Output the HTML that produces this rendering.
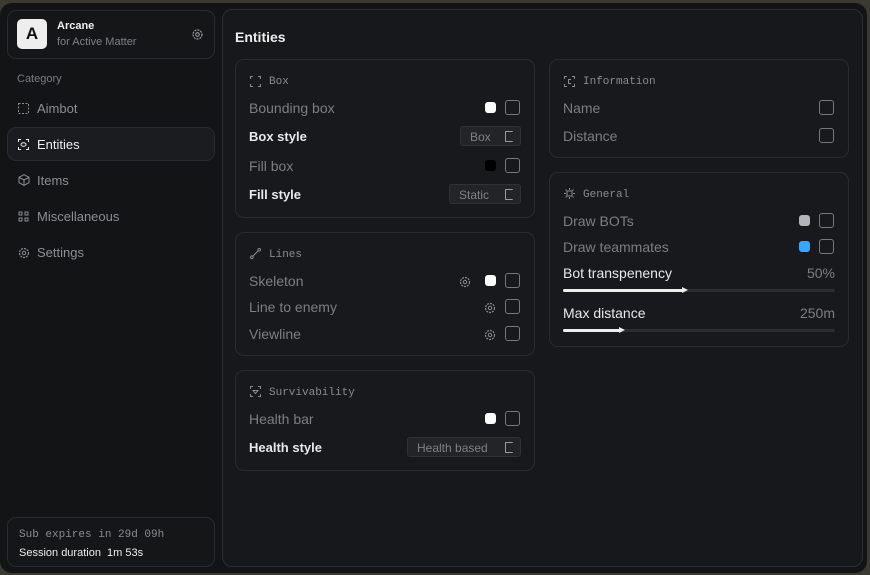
<!DOCTYPE html>
<html><head><meta charset="utf-8"><style>
*{box-sizing:border-box;margin:0;padding:0}
body{width:870px;height:575px;overflow:hidden;background:#3a3a30;font-family:"Liberation Sans",sans-serif;position:relative}
.a{position:absolute}
.win{left:0;top:3px;width:867px;height:570px;background:#131416;border-radius:12px}
.card{position:absolute;border:1px solid #2a2b2f;border-radius:9px;background:#18191c}
.main{left:222px;top:9px;width:641px;height:558px;border:1px solid #2e2f33;border-radius:10px;background:#17181b}
.t{position:absolute;white-space:nowrap}
.lbl{font-size:14px;color:#7d7e82;margin-top:0px}
.lblw{font-size:13px;color:#e8e8ea;font-weight:bold;margin-top:1px}
.hd{font-family:"Liberation Mono",monospace;font-size:11px;color:#8a8b8f;margin-top:1px}
.cb{position:absolute;width:15px;height:15px;border:1px solid #77787c;border-radius:3px}
.sw{position:absolute;width:11px;height:11px;border-radius:3px}
.sel{position:absolute;height:20px;border:1px solid #303135;background:#232428;border-radius:3px;font-size:12px;color:#808185;padding:3px 0 0 9px}
.sel::after{content:"";position:absolute;right:7px;top:4px;width:7px;height:9px;border:1.5px solid #9a9b9f;border-right:none;border-radius:1px}
.side{font-size:13px;color:#8d8e92}
svg{position:absolute}
</style></head><body>
<div class="a win"></div>
<div class="card" style="left:7px;top:10px;width:208px;height:49px;background:#151618"></div>
<div class="a" style="left:17px;top:19px;width:30px;height:30px;background:#eeeeee;border-radius:5px;font-weight:bold;font-size:17px;color:#111;text-align:center;line-height:30px">A</div>
<div class="t" style="left:57px;top:20px;font-size:11px;font-weight:bold;color:#eee">Arcane</div>
<div class="t" style="left:57px;top:36px;font-size:11px;color:#7f8084">for Active Matter</div>
<svg style="left:191px;top:28px" width="13" height="13" viewBox="0 0 13 13"><circle cx="6.5" cy="6.5" r="4.5" fill="none" stroke="#9a9b9f" stroke-width="1.2" stroke-dasharray="2 1"/><circle cx="6.5" cy="6.5" r="1.8" fill="none" stroke="#9a9b9f" stroke-width="1.1"/></svg>
<div class="t" style="left:17px;top:73px;font-size:11px;color:#7a7b7f">Category</div>
<div class="card" style="left:7px;top:127px;width:208px;height:34px;background:#1b1c1f"></div>
<svg style="left:18px;top:103px" width="11" height="11"><rect x="0.5" y="0.5" width="10" height="10" fill="none" stroke="#8d8e92" stroke-dasharray="2 1.5"/></svg>
<div class="t side" style="left:37px;top:101px">Aimbot</div>
<svg style="left:18px;top:139px" width="11" height="11"><path d="M0.5 3V.5H3M8 .5h2.5V3M10.5 8v2.5H8M3 10.5H.5V8" fill="none" stroke="#eee"/><ellipse cx="5.5" cy="5.5" rx="2.5" ry="1.8" fill="none" stroke="#eee"/></svg>
<div class="t side" style="left:37px;top:137px;color:#eeeef0">Entities</div>
<svg style="left:18px;top:174px" width="12" height="12"><path d="M6 .7L11 3.3v5.4L6 11.3 1 8.7V3.3zM1 3.3L6 6l5-2.7M6 6v5.3" fill="none" stroke="#8d8e92"/></svg>
<div class="t side" style="left:37px;top:173px">Items</div>
<svg style="left:18px;top:211px" width="11" height="11"><path d="M1 1h3v3H1zM7 1h3v3H7zM1 7h3v3H1zM7 7h3v3H7z" fill="none" stroke="#8d8e92"/></svg>
<div class="t side" style="left:37px;top:209px">Miscellaneous</div>
<svg style="left:18px;top:247px" width="12" height="12"><circle cx="6" cy="6" r="4.5" fill="none" stroke="#8d8e92" stroke-width="1.2" stroke-dasharray="2 1"/><circle cx="6" cy="6" r="1.7" fill="none" stroke="#8d8e92"/></svg>
<div class="t side" style="left:37px;top:245px">Settings</div>
<div class="card" style="left:7px;top:517px;width:208px;height:50px;background:#151618"></div>
<div class="t" style="left:19px;top:529px;font-family:'Liberation Mono',monospace;font-size:11px;color:#8a8b8f">Sub expires in 29d 09h</div>
<div class="t" style="left:19px;top:547px;font-size:11px;color:#eee">Session duration&nbsp; 1m 53s</div>

<div class="a main"></div>
<div class="t" style="left:235px;top:29px;font-size:14px;font-weight:bold;color:#eee">Entities</div>

<div class="card" style="left:235px;top:59px;width:300px;height:159px"></div>
<svg style="left:250px;top:76px" width="11" height="11"><path d="M.5 3V.5H3M8 .5h2.5V3M10.5 8v2.5H8M3 10.5H.5V8" fill="none" stroke="#8a8b8f"/></svg>
<div class="t hd" style="left:269px;top:75px">Box</div>
<div class="t lbl" style="left:249px;top:100px">Bounding box</div>
<div class="sw" style="left:485px;top:102px;background:#fff"></div><div class="cb" style="left:505px;top:100px"></div>
<div class="t lblw" style="left:249px;top:128px">Box style</div>
<div class="sel" style="left:460px;top:126px;width:61px">Box</div>
<div class="t lbl" style="left:249px;top:158px">Fill box</div>
<div class="sw" style="left:485px;top:160px;background:#000"></div><div class="cb" style="left:505px;top:158px"></div>
<div class="t lblw" style="left:249px;top:186px">Fill style</div>
<div class="sel" style="left:449px;top:184px;width:72px">Static</div>

<div class="card" style="left:235px;top:232px;width:300px;height:124px"></div>
<svg style="left:250px;top:248px" width="11" height="11"><path d="M1.5 9.5L9.5 1.5" stroke="#8a8b8f"/><circle cx="1.8" cy="9.2" r="1.3" fill="#18191c" stroke="#8a8b8f"/><circle cx="9.2" cy="1.8" r="1.3" fill="#18191c" stroke="#8a8b8f"/></svg>
<div class="t hd" style="left:269px;top:248px">Lines</div>
<div class="t lbl" style="left:249px;top:273px">Skeleton</div>
<svg style="left:459px;top:276px" width="12" height="12"><circle cx="6" cy="6" r="4.5" fill="none" stroke="#8a8b8f" stroke-width="1.2" stroke-dasharray="2 1"/><circle cx="6" cy="6" r="1.7" fill="none" stroke="#8a8b8f"/></svg>
<div class="sw" style="left:485px;top:275px;background:#fff"></div><div class="cb" style="left:505px;top:273px"></div>
<div class="t lbl" style="left:249px;top:299px">Line to enemy</div>
<svg style="left:484px;top:302px" width="12" height="12"><circle cx="6" cy="6" r="4.5" fill="none" stroke="#8a8b8f" stroke-width="1.2" stroke-dasharray="2 1"/><circle cx="6" cy="6" r="1.7" fill="none" stroke="#8a8b8f"/></svg>
<div class="cb" style="left:505px;top:299px"></div>
<div class="t lbl" style="left:249px;top:326px">Viewline</div>
<svg style="left:484px;top:329px" width="12" height="12"><circle cx="6" cy="6" r="4.5" fill="none" stroke="#8a8b8f" stroke-width="1.2" stroke-dasharray="2 1"/><circle cx="6" cy="6" r="1.7" fill="none" stroke="#8a8b8f"/></svg>
<div class="cb" style="left:505px;top:326px"></div>

<div class="card" style="left:235px;top:370px;width:300px;height:101px"></div>
<svg style="left:250px;top:386px" width="11" height="11"><path d="M.5 3V.5H3M8 .5h2.5V3M10.5 8v2.5H8M3 10.5H.5V8" fill="none" stroke="#8a8b8f"/><path d="M3 4.5l2.5 3 2.5-3z" fill="none" stroke="#8a8b8f"/></svg>
<div class="t hd" style="left:269px;top:386px">Survivability</div>
<div class="t lbl" style="left:249px;top:411px">Health bar</div>
<div class="sw" style="left:485px;top:413px;background:#fff"></div><div class="cb" style="left:505px;top:411px"></div>
<div class="t lblw" style="left:249px;top:439px">Health style</div>
<div class="sel" style="left:407px;top:437px;width:114px">Health based</div>

<div class="card" style="left:549px;top:59px;width:300px;height:99px"></div>
<svg style="left:564px;top:76px" width="11" height="11"><path d="M.5 3V.5H3M8 .5h2.5V3M10.5 8v2.5H8M3 10.5H.5V8" fill="none" stroke="#8a8b8f"/><path d="M7 3.5H4.5v4H7" fill="none" stroke="#8a8b8f"/></svg>
<div class="t hd" style="left:583px;top:75px">Information</div>
<div class="t lbl" style="left:563px;top:100px">Name</div>
<div class="cb" style="left:819px;top:100px"></div>
<div class="t lbl" style="left:563px;top:128px">Distance</div>
<div class="cb" style="left:819px;top:128px"></div>

<div class="card" style="left:549px;top:172px;width:300px;height:175px"></div>
<svg style="left:564px;top:188px" width="11" height="11"><rect x="3" y="3" width="5" height="5" fill="none" stroke="#8a8b8f"/><path d="M5.5 0v2M5.5 9v2M0 5.5h2M9 5.5h2M1.5 1.5l1 1M8.5 8.5l1 1M9.5 1.5l-1 1M1.5 9.5l1-1" stroke="#8a8b8f"/></svg>
<div class="t hd" style="left:583px;top:188px">General</div>
<div class="t lbl" style="left:563px;top:213px">Draw BOTs</div>
<div class="sw" style="left:799px;top:215px;background:#b5b5b5"></div><div class="cb" style="left:819px;top:213px"></div>
<div class="t lbl" style="left:563px;top:239px">Draw teammates</div>
<div class="sw" style="left:799px;top:241px;background:#3aa6f5"></div><div class="cb" style="left:819px;top:239px"></div>
<div class="t lblw" style="left:563px;top:265px;font-weight:normal;font-size:14px;margin-top:0">Bot transpenency</div>
<div class="t lbl" style="right:35px;top:265px">50%</div>
<div class="a" style="left:563px;top:289px;width:272px;height:3px;background:#2c2d31;border-radius:2px"></div>
<div class="a" style="left:563px;top:289px;width:120px;height:3px;background:#eee;border-radius:2px"></div>
<div class="a" style="left:682px;top:287px;width:0;height:0;border-left:6px solid #eee;border-top:3.5px solid transparent;border-bottom:3.5px solid transparent"></div>
<div class="t lblw" style="left:563px;top:305px;font-weight:normal;font-size:14px;margin-top:0">Max distance</div>
<div class="t lbl" style="right:35px;top:305px">250m</div>
<div class="a" style="left:563px;top:329px;width:272px;height:3px;background:#2c2d31;border-radius:2px"></div>
<div class="a" style="left:563px;top:329px;width:57px;height:3px;background:#eee;border-radius:2px"></div>
<div class="a" style="left:619px;top:327px;width:0;height:0;border-left:6px solid #eee;border-top:3.5px solid transparent;border-bottom:3.5px solid transparent"></div>
</body></html>
